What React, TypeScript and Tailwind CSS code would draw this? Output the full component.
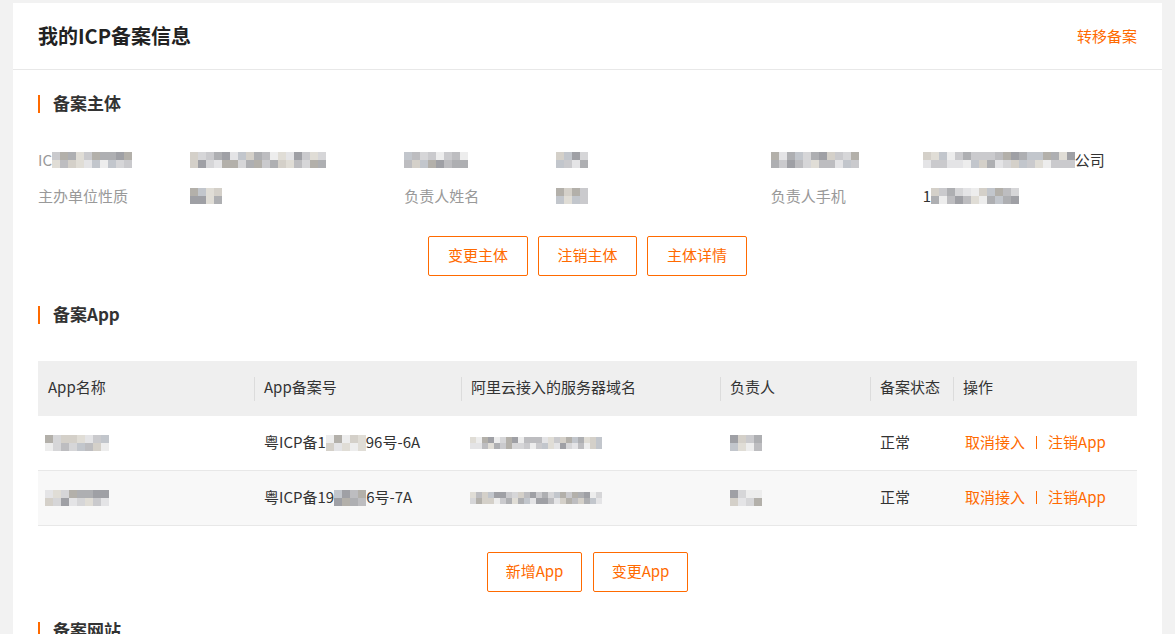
import React from "react";

const FONT = '"Noto Sans CJK SC", "Liberation Sans", sans-serif';

const PALETTE = ["#e4e4e6", "#d6d6d8", "#cacacd", "#bdbdc0", "#aeafb2", "#9fa0a5", "#d4d0c9", "#e0ddd6", "#ededed", "#c2c6cc", "#b3b0aa"];

function Mosaic({ w, h = 16, seed = 1, cell = 8 }: { w: number; h?: number; seed?: number; cell?: number }) {
  const cols = Math.ceil(w / cell);
  const rows = Math.ceil(h / cell);
  let s = seed * 9301 + 49297;
  const rand = () => {
    s = (s * 9301 + 49297) % 233280;
    return s / 233280;
  };
  const cells: React.ReactNode[] = [];
  for (let r = 0; r < rows; r++) {
    for (let c = 0; c < cols; c++) {
      const col = PALETTE[Math.floor(rand() * PALETTE.length)];
      cells.push(<div key={r + "-" + c} style={{ width: cell, height: cell, background: col }} />);
    }
  }
  return (
    <div className="inline-flex flex-wrap shrink-0 overflow-hidden align-middle blur-[0.7px]" style={{ width: cols * cell, height: rows * cell }}>
      {cells}
    </div>
  );
}

function SectionTitle({ children }: { children: React.ReactNode }) {
  return (
    <div className="flex items-center h-[18px]">
      <div className="w-[2px] h-[18px] bg-[#ff6a00]" />
      <div className="ml-[13px] pb-[3px] text-[17px] font-semibold text-[#333] leading-none">{children}</div>
    </div>
  );
}

function OBtn({ children, w }: { children: React.ReactNode; w: string }) {
  return (
    <button className={`h-[40px] ${w} border border-[#ff6a00] rounded-[2px] text-[15px] text-[#ff6a00] bg-white flex items-center justify-center pb-[2px]`}>
      {children}
    </button>
  );
}

function InfoCell({ label, value }: { label: React.ReactNode; value: React.ReactNode }) {
  return (
    <div className="flex items-center h-[36px] text-[15px]">
      <div className="w-[152px] text-[#999] flex items-center">{label}</div>
      <div className="text-[#333] flex items-center">{value}</div>
    </div>
  );
}

export default function App() {
  return (
    <div className="bg-[#f2f2f2] pt-[3px] px-[13px] overflow-hidden h-[634px]" style={{ fontFamily: FONT }}>
      <div className="bg-white h-[700px]">
        {/* header */}
        <div className="h-[67px] px-[25px] flex items-center justify-between border-b border-[#e8e8e8]">
          <div className="text-[20px] font-bold text-[#222]">我的ICP备案信息</div>
          <div className="text-[15px] text-[#ff6a00]">转移备案</div>
        </div>

        <div className="px-[25px]">
          <div className="pt-[25px]">
            <SectionTitle>备案主体</SectionTitle>
          </div>

          <div className="mt-[29px] grid grid-cols-3">
            <InfoCell
              label={
                <span className="flex items-center">
                  <span>IC</span>
                  <Mosaic w={80} seed={3} />
                </span>
              }
              value={<Mosaic w={136} seed={7} />}
            />
            <InfoCell label={<Mosaic w={64} seed={11} />} value={<Mosaic w={32} seed={13} />} />
            <InfoCell
              label={<Mosaic w={88} seed={17} />}
              value={
                <span className="flex items-center">
                  <Mosaic w={152} seed={19} />
                  <span>公司</span>
                </span>
              }
            />
            <InfoCell label="主办单位性质" value={<Mosaic w={30} seed={23} />} />
            <InfoCell label="负责人姓名" value={<Mosaic w={32} seed={29} />} />
            <InfoCell
              label="负责人手机"
              value={
                <span className="flex items-center">
                  <span>1</span>
                  <Mosaic w={84} seed={31} />
                </span>
              }
            />
          </div>

          <div className="mt-[22px] flex justify-center gap-[10px]">
            <OBtn w="w-[100px]">变更主体</OBtn>
            <OBtn w="w-[99px]">注销主体</OBtn>
            <OBtn w="w-[100px]">主体详情</OBtn>
          </div>

          <div className="mt-[30px]">
            <SectionTitle>备案App</SectionTitle>
          </div>

          {/* table */}
          <div className="mt-[37px] text-[15px] text-[#333]">
            <div className="grid grid-cols-[216px_207px_259px_150px_83px_184px] h-[55px] bg-[#efefef]">
              <div className="flex items-center pl-[10px] pb-[2px]">App名称</div>
              {["App备案号", "阿里云接入的服务器域名", "负责人", "备案状态", "操作"].map((t) => (
                <div key={t} className="flex items-center">
                  <div className="w-px h-[24px] bg-[#dcdcdc]" />
                  <span className="ml-[9px] pb-[2px]">{t}</span>
                </div>
              ))}
            </div>
            {[
              { seed: 41, pre: "粤ICP备1", mw: 40, post: "96号-6A", bg: "bg-white" },
              { seed: 53, pre: "粤ICP备19", mw: 32, post: "6号-7A", bg: "bg-[#f8f8f8]" },
            ].map((r, i) => (
              <div key={i} className={`grid grid-cols-[216px_207px_259px_150px_83px_184px] h-[55px] border-b border-[#e8e8e8] ${r.bg}`}>
                <div className="flex items-center pl-[7px]">
                  <Mosaic w={i === 0 ? 60 : 64} seed={r.seed} />
                </div>
                <div className="flex items-center pl-[10px] pb-[1px]">
                  <span>{r.pre}</span>
                  <Mosaic w={r.mw} seed={r.seed + 1} />
                  <span>{r.post}</span>
                </div>
                <div className="flex items-center pl-[9px]">
                  <Mosaic w={130} h={12} cell={6} seed={r.seed + 2} />
                </div>
                <div className="flex items-center pl-[10px]">
                  <Mosaic w={30} seed={r.seed + 3} />
                </div>
                <div className="flex items-center pl-[10px] pb-[1px]">正常</div>
                <div className="flex items-center pl-[12px] pb-[1px] text-[#ff6a00]">
                  <span>取消接入</span>
                  <span className="w-px h-[13px] bg-[#ff6a00] mx-[11px]" />
                  <span>注销App</span>
                </div>
              </div>
            ))}
          </div>

          <div className="mt-[26px] flex justify-center gap-[11px]">
            <OBtn w="w-[95px]">新增App</OBtn>
            <OBtn w="w-[95px]">变更App</OBtn>
          </div>

          <div className="mt-[30px]">
            <SectionTitle>备案网站</SectionTitle>
          </div>
        </div>
      </div>
    </div>
  );
}
